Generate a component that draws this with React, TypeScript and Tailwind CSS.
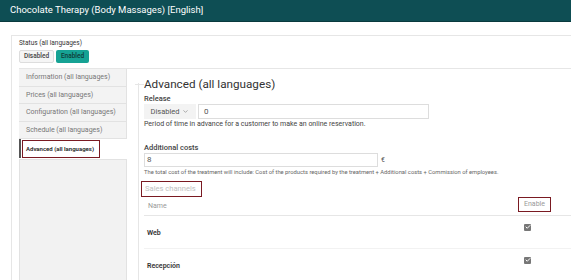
import { Check, ChevronDown } from 'lucide-react';

const tabs = [
  'Information (all languages)',
  'Prices (all languages)',
  'Configuration (all languages)',
  'Schedule (all languages)',
];

const channels = ['Web', 'Recepción'];

function CheckBox() {
  return (
    <span className="flex h-[7px] w-[7px] items-center justify-center rounded-[1px] bg-[#777]">
      <Check className="h-[6px] w-[6px] text-white" strokeWidth={4} />
    </span>
  );
}

export default function App() {
  return (
    <div className="h-[280px] w-[571px] overflow-hidden whitespace-nowrap bg-white font-['Roboto',sans-serif] text-[#333]">
      <div className="flex h-[22px] items-center border-b border-[#0a3a3e] bg-[#0e4e54] pl-[10px] text-[9.5px] text-white">
        Chocolate Therapy (Body Massages) [English]
      </div>

      <div className="pl-[11px] pt-[13px]">
        <div className="border-l border-t border-[#e6e6e6] pl-[7px] pt-[1px]">
          <div className="text-[6.5px] leading-[12px] text-[#333]">Status (all languages)</div>
          <div className="mt-[1px] flex gap-[2px]">
            <span className="flex h-[13px] w-[35px] items-center justify-center rounded-[2px] border border-[#ddd] bg-[#f5f5f5] text-[6.5px] font-medium text-[#444]">
              Disabled
            </span>
            <span className="flex h-[13px] w-[33px] items-center justify-center rounded-[2px] bg-[#16a294] text-[6.5px] font-medium text-[#0f3b37]">
              Enabled
            </span>
          </div>

          <div className="mt-[5px] flex border-t border-[#e6e6e6]">
            <div className="flex h-[212px] w-[108px] flex-col">
              {tabs.map((t) => (
                <div
                  key={t}
                  className="flex h-[17.5px] items-center border-b border-r border-[#e2e2e2] bg-[#f3f3f3] pl-[7px] text-[7px] text-[#777]"
                >
                  {t}
                </div>
              ))}
              <div className="flex h-[19px] items-center border-l-[2px] border-[#555] bg-white pl-[1px]">
                <span className="flex h-[18px] w-[78px] items-center border-[1.5px] border-[#7a1a22] pl-[3px] text-[6px] font-semibold text-[#222]">
                  Advanced (all languages)
                </span>
              </div>
              <div className="mt-[1px] flex-1 border border-[#e2e2e2] bg-[#f2f2f2]" />
            </div>

            <div className="ml-[11px] mt-[14px] flex-1 border-l border-[#e6e6e6]">
              <div className="-ml-[4px] -mt-[7px] flex items-center">
                <span className="h-px w-[9px] bg-[#e6e6e6]" />
                <span className="text-[11.7px] leading-[16px] text-[#333]">Advanced (all languages)</span>
              </div>
              <div className="pl-[5px]">
                <div className="mt-[2px] text-[7.5px] font-medium leading-[10px] text-[#444]">Release</div>
                <div className="flex h-[15px] gap-[2px]">
                  <span className="flex w-[52px] items-center justify-center gap-[3px] bg-[#f3f3f3] text-[7.5px] text-[#555]">
                    Disabled <ChevronDown className="h-[7px] w-[7px] text-[#777]" />
                  </span>
                  <span className="flex w-[231px] items-center border border-[#ddd] pl-[5px] text-[8px] text-[#555]">0</span>
                </div>
                <div className="text-[7px] leading-[10px] text-[#444]">
                  Period of time in advance for a customer to make an online reservation.
                </div>

                <div className="mt-[14px] text-[7.5px] font-medium leading-[10px] text-[#444]">Additional costs</div>
                <div className="flex h-[14px] items-center gap-[3px]">
                  <span className="flex h-full w-[234px] items-center border border-[#ddd] pl-[2px] text-[8px] text-[#555]">8</span>
                  <span className="text-[7px] text-[#555]">€</span>
                </div>
                <div className="text-[5.8px] leading-[10px] text-[#666]">
                  The total cost of the treatment will include: Cost of the products required by the treatment + Additional costs + Commission of employees.
                </div>

                <div className="-ml-[3px] mt-[4px] flex h-[16px] w-[61px] items-center border-[1.5px] border-[#7a1a22] pl-[3px] text-[7.6px] text-[#c0c0c0]">
                  Sales channels
                </div>
                <div className="flex h-[19px] items-start justify-between border-b border-[#e6e6e6] pl-[4px]">
                  <span className="self-center text-[7px] text-[#999]">Name</span>
                  <span className="mr-[20px] flex h-[15px] w-[33px] items-center justify-center border-[1.5px] border-[#7a1a22] text-[7px] text-[#999]">
                    Enable
                  </span>
                </div>
                {channels.map((c) => (
                  <div key={c} className="flex h-[33px] items-center justify-between border-b border-[#f2f2f2] pl-[3px]">
                    <span className="mt-[2px] text-[7px] font-semibold text-[#333]">{c}</span>
                    <span className="-mt-[10px] mr-[40px]">
                      <CheckBox />
                    </span>
                  </div>
                ))}
              </div>
            </div>
          </div>
        </div>
      </div>
    </div>
  );
}
